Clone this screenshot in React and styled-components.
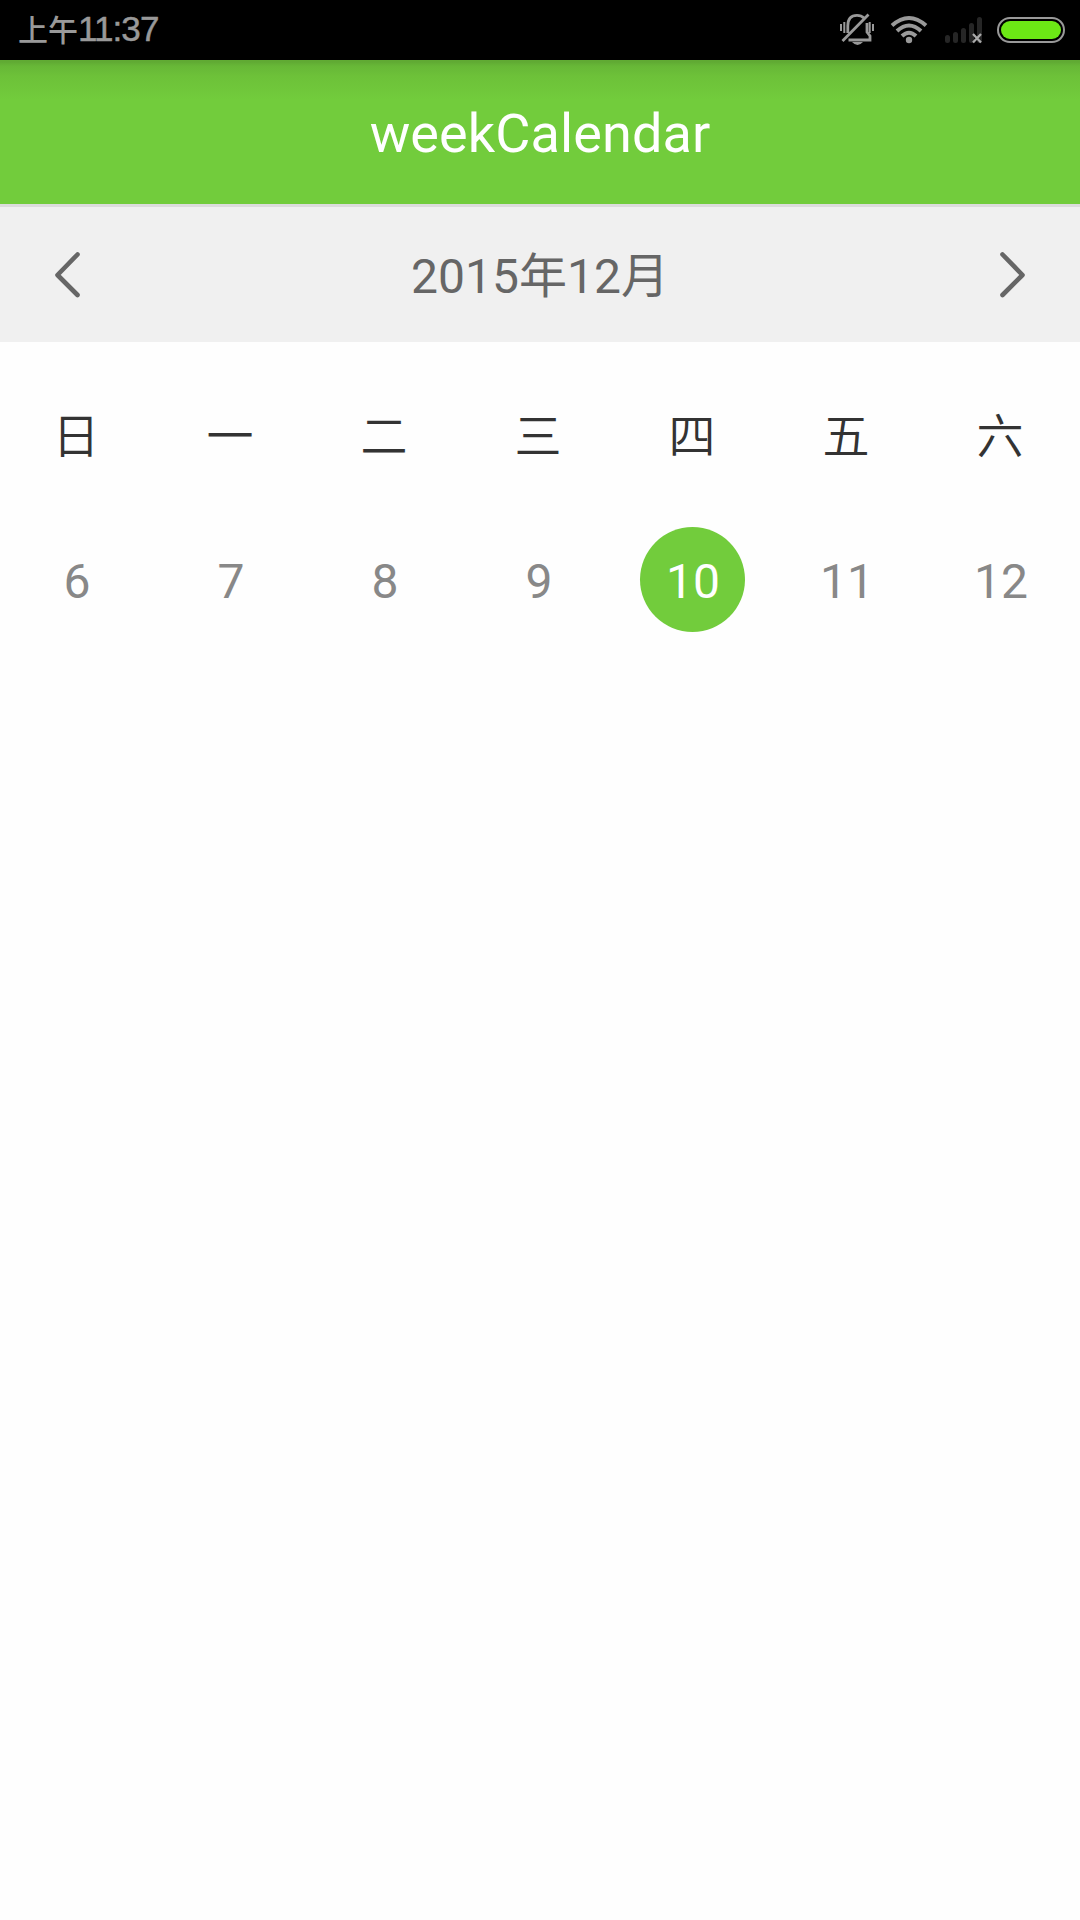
import React from "react";
import styled, { createGlobalStyle } from "styled-components";

const Global = createGlobalStyle`
  *, *::before, *::after { box-sizing: border-box; }
  html, body { margin: 0; padding: 0; background: #fefefe; }
  body { font-family: Roboto, "Noto Sans CJK SC", sans-serif; }
`;

const Screen = styled.div`
  width: 1080px;
  height: 1920px;
  display: flex;
  flex-direction: column;
  background: #fefefe;
  overflow: hidden;
`;

const StatusBar = styled.header`
  height: 60px;
  flex: none;
  display: flex;
  align-items: center;
  justify-content: space-between;
  background: #000;
  padding-left: 18px;
`;

const Clock = styled.time`
  display: flex;
  align-items: baseline;
  height: 60px;
  line-height: 57px;
  color: #999;
  white-space: nowrap;
`;

const Meridiem = styled.span`
  font-family: "Noto Sans CJK SC", sans-serif;
  font-size: 30px;
  font-weight: 500;
`;

const Digits = styled.span`
  font-family: "Liberation Sans", Arial, sans-serif;
  font-size: 35px;
  letter-spacing: -0.9px;
  -webkit-text-stroke: 0.5px #999;
`;

const StatusIcons = styled.svg`
  display: block;
  flex: none;
`;

const TitleBar = styled.div`
  height: 147px;
  flex: none;
  display: flex;
  align-items: center;
  justify-content: center;
  padding-top: 4px;
  border-bottom: 3px solid #dcdcdc;
  background: linear-gradient(#60aa33 0, #60aa33 2px, #67b737 6px, #6dc139 16px, #72cc3c 40px);
`;

const Title = styled.h1`
  margin: 0;
  font-size: 54px;
  line-height: 64px;
  font-weight: 400;
  letter-spacing: 0.1px;
  color: #fff;
`;

const MonthBar = styled.nav`
  height: 135px;
  flex: none;
  display: flex;
  align-items: center;
  justify-content: space-between;
  padding: 0 48px 0 48px;
  background: #f0f0f0;
`;

const MonthLabel = styled.h2`
  margin: 0;
  padding-top: 4px;
  font-size: 48px;
  line-height: 60px;
  font-weight: 400;
  color: #666;
`;

const ArrowButton = styled.button`
  display: flex;
  padding: 0;
  border: 0;
  background: none;
`;

const Calendar = styled.main`
  display: flex;
  flex-direction: column;
  margin-left: -1px;
  padding-top: 56px;
`;

const Week = styled.div`
  display: grid;
  grid-template-columns: repeat(7, 154px);
  height: ${(p) => p.$height}px;
`;

const Weekday = styled.span`
  display: flex;
  align-items: center;
  justify-content: center;
  font-family: "Noto Sans CJK SC", sans-serif;
  font-size: 47px;
  font-weight: 350;
  line-height: 70px;
  color: #333;
`;

const DayCell = styled.div`
  display: flex;
  align-items: center;
  justify-content: center;
`;

const Day = styled.span`
  width: 105px;
  height: 105px;
  padding-left: 2px;
  border-radius: 50%;
  text-align: center;
  font-size: 48px;
  line-height: 109px;
  color: ${(p) => (p.$selected ? "#fff" : "#888")};
  background: ${(p) => (p.$selected ? "#72cc3c" : "transparent")};
`;

const Arrow = ({ direction }) => (
  <svg width="36" height="48" viewBox="0 0 36 48" fill="none" stroke="#666" strokeWidth="4.6" strokeLinecap="round" strokeLinejoin="round">
    <path d={direction === "left" ? "M29.5 3.500L9.500 24L29.500 44" : "M6.500 3.500L26.500 24L6.500 44"} />
  </svg>
);

const StatusGlyphs = () => (
  <StatusIcons width="260" height="60" viewBox="0 0 260 60" fill="none">
    <g stroke="#999" strokeWidth="2.8">
      <path d="M27.800 33V26C27.800 19 31 15.300 37 15.300C40 15.300 42 16 44 18M47 23V32L50 36V40H28.500M22.500 41L48.500 14.500" />
      <path d="M21 24V31M24.300 22V33M49.700 22V33M53 24V31" strokeWidth="2" />
    </g>
    <path d="M32 42H43Q37.500 48 32 42Z" fill="#999" />
    <g stroke="#999" strokeWidth="4">
      <path d="M72 25.500Q89 10.500 106 25.500M77 31Q89 20 101 31M82 36Q89 29.500 96 36" />
    </g>
    <circle cx="89" cy="40" r="3.200" fill="#999" />
    <g stroke="#262626" strokeWidth="5" strokeLinecap="round">
      <path d="M127.500 37.500V40.500M135.500 34.500V40.500M143.500 30.500V40.500M151.500 25.500V40.500M159.500 19.500V40.500" />
    </g>
    <path d="M153 34L161 42.500M161 34L153 42.500" stroke="#aaa" strokeWidth="2.300" />
    <rect x="178" y="18" width="66" height="24" rx="12" stroke="#999" strokeWidth="2" />
    <rect x="181" y="21" width="60" height="18" rx="9" fill="#6ce815" />
  </StatusIcons>
);

const WEEKDAYS = ["日", "一", "二", "三", "四", "五", "六"];
const DAYS = [6, 7, 8, 9, 10, 11, 12];
const SELECTED = 10;

export default function App() {
  return (
    <Screen>
      <Global />
      <StatusBar>
        <Clock>
          <Meridiem>上午</Meridiem>
          <Digits>11:37</Digits>
        </Clock>
        <StatusGlyphs />
      </StatusBar>
      <TitleBar>
        <Title>weekCalendar</Title>
      </TitleBar>
      <MonthBar>
        <ArrowButton aria-label="上个月"><Arrow direction="left" /></ArrowButton>
        <MonthLabel>2015年12月</MonthLabel>
        <ArrowButton aria-label="下个月"><Arrow direction="right" /></ArrowButton>
      </MonthBar>
      <Calendar>
        <Week $height={70}>
          {WEEKDAYS.map((name) => <Weekday key={name}>{name}</Weekday>)}
        </Week>
        <Week $height={223}>
          {DAYS.map((day) => (
            <DayCell key={day}><Day $selected={day === SELECTED}>{day}</Day></DayCell>
          ))}
        </Week>
      </Calendar>
    </Screen>
  );
}
